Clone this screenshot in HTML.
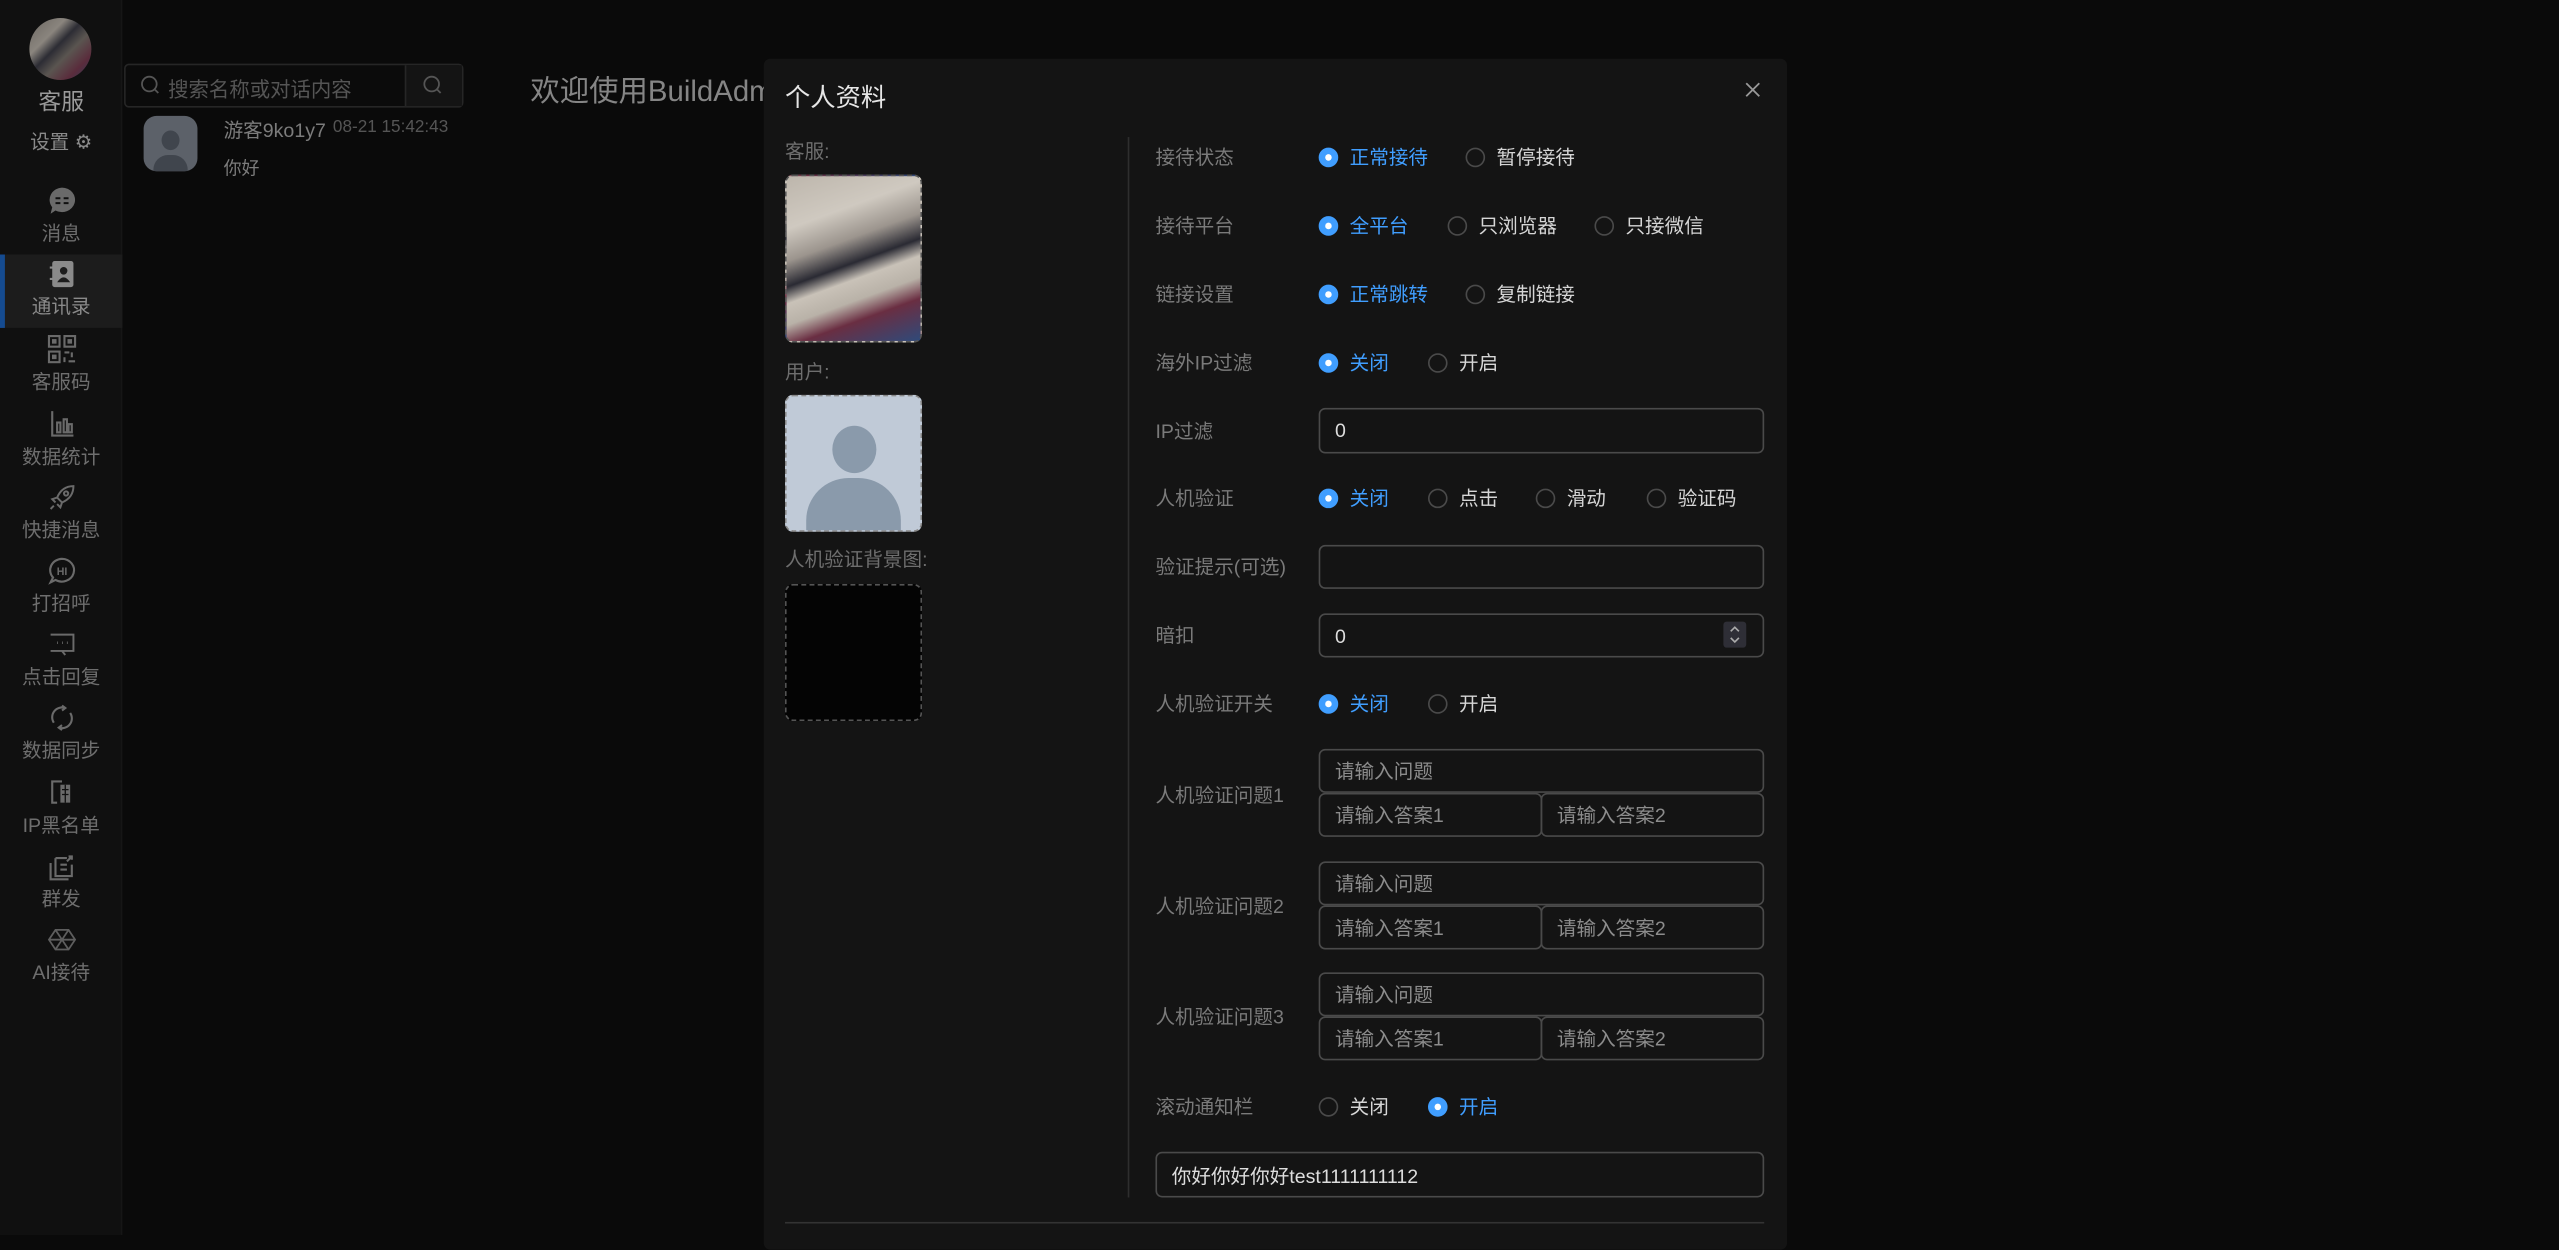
<!DOCTYPE html>
<html><head><meta charset="utf-8">
<style>
*{margin:0;padding:0;box-sizing:border-box}
html,body{width:2559px;height:1235px;overflow:hidden;background:#0a0a0a}
body{font-family:"Liberation Sans","Noto Sans CJK SC",sans-serif}
#w{position:absolute;left:0;top:0;width:1568px;height:757px;transform:scale(1.632,1.6314);transform-origin:0 0}
.a{position:absolute;white-space:nowrap}
#side{position:absolute;left:0;top:0;width:75px;height:757px;background:#101010;border-right:1px solid #161616}
.mi{position:absolute;left:0;width:75px;text-align:center;color:#6e6e6e;font-size:12px}
.mi svg{display:block;margin:0 auto}
.lbl{position:absolute;left:708px;color:#7a7a7a;font-size:12px;transform:translateY(-50%)}
.r{position:absolute;font-size:12px;color:#d6d6d6;transform:translateY(-50%);padding-left:19px}
.r:before{content:"";position:absolute;left:0;top:50%;margin-top:-6px;width:12px;height:12px;border-radius:50%;border:1px solid #4a4a4a;box-sizing:border-box}
.r.on{color:#409eff}
.r.on:before{background:#409eff;border-color:#409eff}
.r.on:after{content:"";position:absolute;left:4px;top:50%;margin-top:-2px;width:4px;height:4px;border-radius:50%;background:#fff}
.in{position:absolute;border:1px solid #4a4a4a;border-radius:4px;font-size:12px;color:#8c8c8c;padding-left:9px;display:flex;align-items:center}
</style></head><body><div id="w">

<div id="side">
 <div class="a" style="left:18px;top:11px;width:38px;height:38px;border-radius:50%;background:linear-gradient(135deg,#6a6560 0%,#8a857e 30%,#2c2c34 45%,#5a5550 60%,#5a2c3c 80%,#2a3a5a 100%)"></div>
 <div class="mi" style="top:52px;font-size:14px;color:#9a9a9a">客服</div>
 <div class="mi" style="top:78px;color:#8a8a8a">设置 <span style="font-size:12px">⚙</span></div>
 <div class="a" style="left:0;top:156px;width:75px;height:45px;background:#1c1c1c;border-left:3px solid #154b90"></div>
 <div class="mi" style="top:114px"><svg width="18" height="18" viewBox="0 0 18 18"><path d="M9 1a8 7.5 0 1 1-4 14l-3 2 1-4A8 7.5 0 0 1 9 1z" fill="#6a6a6a"/><path d="M5 7.5h3M10 7.5h3M5 10.5h3M10 10.5h3" stroke="#101010" stroke-width="1.2"/></svg><div style="margin-top:2px">消息</div></div>
 <div class="mi" style="top:159px;color:#8a8a8a"><svg width="18" height="18" viewBox="0 0 18 18"><rect x="3" y="1" width="13" height="16" rx="1.5" fill="#8a8a8a"/><circle cx="10" cy="7" r="2.3" fill="#1c1c1c"/><path d="M6 14q4-6 8 0z" fill="#1c1c1c"/><path d="M1.5 5h3M1.5 12h3" stroke="#8a8a8a" stroke-width="1.3"/></svg><div style="margin-top:2px">通讯录</div></div>
 <div class="mi" style="top:205px"><svg width="18" height="18" viewBox="0 0 18 18" fill="none" stroke="#6a6a6a" stroke-width="1.3"><rect x="1" y="1" width="6.5" height="6.5"/><rect x="10.5" y="1" width="6.5" height="6.5"/><rect x="1" y="10.5" width="6.5" height="6.5"/><rect x="3.5" y="3.5" width="1.5" height="1.5" fill="#6a6a6a"/><rect x="13" y="3.5" width="1.5" height="1.5" fill="#6a6a6a"/><rect x="3.5" y="13" width="1.5" height="1.5" fill="#6a6a6a"/><path d="M10.5 11h3M15 11v3M10.5 14v3M13 16.5h4"/></svg><div style="margin-top:2px">客服码</div></div>
 <div class="mi" style="top:251px"><svg width="18" height="18" viewBox="0 0 18 18" fill="none" stroke="#6a6a6a" stroke-width="1.3"><path d="M3 1v15h13"/><rect x="6" y="8" width="2" height="6"/><rect x="10" y="6" width="2" height="8"/><rect x="13" y="9" width="2" height="5"/></svg><div style="margin-top:2px">数据统计</div></div>
 <div class="mi" style="top:296px"><svg width="18" height="18" viewBox="0 0 18 18" fill="none" stroke="#6a6a6a" stroke-width="1.2"><path d="M16 2Q9 2 6 9l3 3q7-3 7-10zM6 9l-3 1 2 2M9 12l-1 3-2-2M4 14l-2 2"/><circle cx="11.5" cy="6.5" r="1.3"/></svg><div style="margin-top:2px">快捷消息</div></div>
 <div class="mi" style="top:341px"><svg width="18" height="18" viewBox="0 0 18 18" fill="none" stroke="#6a6a6a" stroke-width="1.3"><path d="M9 1.5a7.5 7 0 1 1-4 13l-3 1.5 1.5-3A7.5 7 0 0 1 9 1.5z"/><text x="9" y="11.5" font-size="6.5" font-family="Liberation Sans" font-weight="bold" fill="#6a6a6a" stroke="none" text-anchor="middle">HI</text></svg><div style="margin-top:2px">打招呼</div></div>
 <div class="mi" style="top:386px"><svg width="18" height="18" viewBox="0 0 18 18" fill="none" stroke="#6a6a6a" stroke-width="1.2"><path d="M2 3h14v10H9l2 2.5M9 13H2z"/><path d="M6 8h.5M9 8h.5M12 8h.5" stroke-width="1.5"/></svg><div style="margin-top:2px">点击回复</div></div>
 <div class="mi" style="top:431px"><svg width="18" height="18" viewBox="0 0 18 18" fill="none" stroke="#6a6a6a" stroke-width="1.3"><path d="M4 12A6 6 0 0 1 11 3M14 6a6 6 0 0 1-7 9"/><path d="M9 1.5l2 1.5-2 1.5M9 13.5l-2 1.5 2 1.5"/></svg><div style="margin-top:2px">数据同步</div></div>
 <div class="mi" style="top:477px"><svg width="18" height="18" viewBox="0 0 18 18" fill="none" stroke="#6a6a6a" stroke-width="1.3"><path d="M9 2H3v13h3"/><rect x="8" y="4" width="6" height="11" fill="#6a6a6a" stroke="none"/><path d="M9 7h4M9 10h4M11 4v11" stroke="#101010" stroke-width=".8"/></svg><div style="margin-top:2px">IP黑名单</div></div>
 <div class="mi" style="top:522px"><svg width="18" height="18" viewBox="0 0 18 18" fill="none" stroke="#6a6a6a" stroke-width="1.3"><path d="M5 4h7M5 4v11h10V8"/><path d="M2 7v10h11"/><path d="M8 8h4M8 11h4M12 6l3-3M13 3h2v2"/></svg><div style="margin-top:2px">群发</div></div>
 <div class="mi" style="top:567px"><svg width="18" height="18" viewBox="0 0 18 18" fill="none" stroke="#5e5e5e" stroke-width="1.1"><path d="M5 3h8l4 6-4 6H5L1 9z"/><path d="M5 3l4 6M13 3L9 9M9 9l-4 6M9 9l4 6M1 9h16"/></svg><div style="margin-top:2px">AI接待</div></div>
</div>

<div class="a" style="left:76px;top:39px;width:208px;height:27px;border:1px solid #262626;border-radius:3px;background:#0b0b0b"></div>
<div class="a" style="left:248px;top:40px;width:35px;height:25px;background:#141414;border-left:1px solid #262626"></div>
<svg class="a" style="left:86px;top:46px" width="12" height="12" viewBox="0 0 12 12" fill="none" stroke="#555" stroke-width="1.1"><circle cx="5.5" cy="5.5" r="4.5"/><path d="M9 9l2 2"/></svg>
<svg class="a" style="left:259px;top:46px" width="12" height="12" viewBox="0 0 12 12" fill="none" stroke="#555" stroke-width="1.1"><circle cx="5.5" cy="5.5" r="4.5"/><path d="M9 9l2 2"/></svg>
<div class="a" style="left:103px;top:44px;font-size:12.5px;color:#555">搜索名称或对话内容</div>
<div class="a" style="left:88px;top:71px;width:33px;height:34px;border-radius:8px;background:#5c6169;overflow:hidden"><div class="a" style="left:11px;top:9px;width:11px;height:12px;border-radius:50%;background:#40454d"></div><div class="a" style="left:6px;top:24px;width:21px;height:14px;border-radius:9px 9px 0 0;background:#40454d"></div></div>
<div class="a" style="left:137px;top:71px;font-size:12px;color:#7c7c7c">游客9ko1y7</div>
<div class="a" style="left:204px;top:72px;font-size:10.5px;color:#555">08-21 15:42:43</div>
<div class="a" style="left:137px;top:95px;font-size:11px;color:#7c7c7c">你好</div>
<div class="a" style="left:325px;top:42px;font-size:18px;color:#858585">欢迎使用BuildAdmi</div>

<div class="a" style="left:468px;top:36px;width:627px;height:730px;background:#141414;border-radius:4px"></div>
<div class="a" style="left:481px;top:48px;font-size:15.5px;color:#e6e6e6">个人资料</div>
<svg class="a" style="left:1069px;top:50px" width="10" height="10" viewBox="0 0 10 10" stroke="#999" stroke-width="1.1"><path d="M1 1l8 8M9 1L1 9"/></svg>

<div class="a" style="left:481px;top:84px;font-size:12px;color:#6e6e6e">客服:</div>
<div class="a" style="left:481px;top:107px;width:84px;height:103px;border-radius:5px;overflow:hidden;border:1px dashed #555;background:linear-gradient(160deg,#bdb6ac 0%,#cfc9c0 25%,#9c958e 40%,#2a2a33 52%,#c9c2b8 60%,#b9b2a8 70%,#6a2e42 80%,#2f4a7a 100%)"></div>
<div class="a" style="left:481px;top:219px;font-size:12px;color:#6e6e6e">用户:</div>
<div class="a" style="left:481px;top:242px;width:84px;height:84px;border-radius:5px;overflow:hidden;background:#c0cad7;border:1px dashed #888">
 <div class="a" style="left:28px;top:18px;width:27px;height:29px;border-radius:50%;background:#8a9aab"></div>
 <div class="a" style="left:12px;top:50px;width:58px;height:40px;border-radius:26px 26px 0 0;background:#8a9aab"></div>
</div>
<div class="a" style="left:481px;top:334px;font-size:12px;color:#6e6e6e">人机验证背景图:</div>
<div class="a" style="left:481px;top:358px;width:84px;height:84px;border-radius:5px;background:#040404;border:1px dashed #555"></div>

<div class="a" style="left:691px;top:84px;width:1px;height:650px;background:#2e2e2e"></div>

<div class="lbl" style="top:96px">接待状态</div>
<div class="r on" style="left:808px;top:96px">正常接待</div>
<div class="r" style="left:898px;top:96px">暂停接待</div>

<div class="lbl" style="top:138px">接待平台</div>
<div class="r on" style="left:808px;top:138px">全平台</div>
<div class="r" style="left:887px;top:138px">只浏览器</div>
<div class="r" style="left:977px;top:138px">只接微信</div>

<div class="lbl" style="top:180px">链接设置</div>
<div class="r on" style="left:808px;top:180px">正常跳转</div>
<div class="r" style="left:898px;top:180px">复制链接</div>

<div class="lbl" style="top:222px">海外IP过滤</div>
<div class="r on" style="left:808px;top:222px">关闭</div>
<div class="r" style="left:875px;top:222px">开启</div>

<div class="lbl" style="top:264px">IP过滤</div>
<div class="in" style="left:808px;top:250px;width:273px;height:28px;color:#ddd">0</div>

<div class="lbl" style="top:305px">人机验证</div>
<div class="r on" style="left:808px;top:305px">关闭</div>
<div class="r" style="left:875px;top:305px">点击</div>
<div class="r" style="left:941px;top:305px">滑动</div>
<div class="r" style="left:1009px;top:305px">验证码</div>

<div class="lbl" style="top:347px">验证提示(可选)</div>
<div class="in" style="left:808px;top:334px;width:273px;height:27px"></div>

<div class="lbl" style="top:389px">暗扣</div>
<div class="in" style="left:808px;top:376px;width:273px;height:27px;color:#ddd">0</div>
<div class="a" style="left:1056px;top:381px;width:14px;height:16px;background:#2e2e36;border-radius:2px"></div>
<svg class="a" style="left:1059px;top:382px" width="8" height="14" viewBox="0 0 8 14" fill="none" stroke="#aaa" stroke-width="1"><path d="M1.5 5l2.5-2.5L6.5 5M1.5 9l2.5 2.5L6.5 9"/></svg>

<div class="lbl" style="top:431px">人机验证开关</div>
<div class="r on" style="left:808px;top:431px">关闭</div>
<div class="r" style="left:875px;top:431px">开启</div>

<div class="lbl" style="top:487px">人机验证问题1</div>
<div class="in" style="left:808px;top:459px;width:273px;height:27px">请输入问题</div>
<div class="in" style="left:808px;top:486px;width:137px;height:27px">请输入答案1</div>
<div class="in" style="left:944px;top:486px;width:137px;height:27px">请输入答案2</div>

<div class="lbl" style="top:555px">人机验证问题2</div>
<div class="in" style="left:808px;top:528px;width:273px;height:27px">请输入问题</div>
<div class="in" style="left:808px;top:555px;width:137px;height:27px">请输入答案1</div>
<div class="in" style="left:944px;top:555px;width:137px;height:27px">请输入答案2</div>

<div class="lbl" style="top:623px">人机验证问题3</div>
<div class="in" style="left:808px;top:596px;width:273px;height:27px">请输入问题</div>
<div class="in" style="left:808px;top:623px;width:137px;height:27px">请输入答案1</div>
<div class="in" style="left:944px;top:623px;width:137px;height:27px">请输入答案2</div>

<div class="lbl" style="top:678px">滚动通知栏</div>
<div class="r" style="left:808px;top:678px">关闭</div>
<div class="r on" style="left:875px;top:678px">开启</div>

<div class="in" style="left:708px;top:706px;width:373px;height:28px;color:#ddd">你好你好你好test1111111112</div>

<div class="a" style="left:481px;top:749px;width:600px;height:1px;background:#333"></div>
</div></body></html>
